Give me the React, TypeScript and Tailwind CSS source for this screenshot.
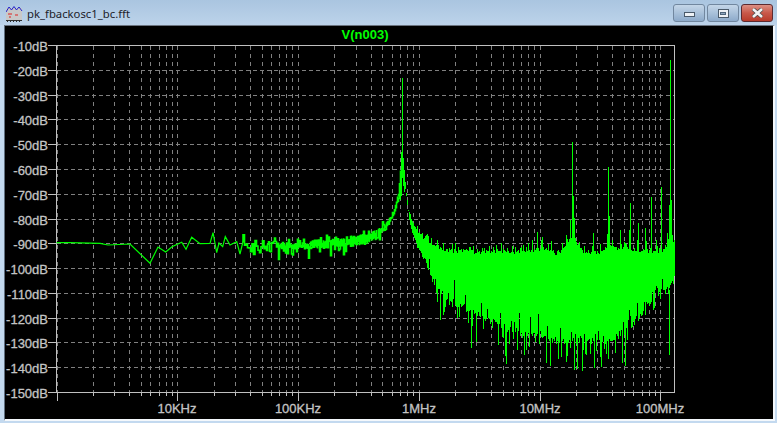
import React from "react";

const GREEN = "#00ff00";
const LEFT = 56.5;
const RIGHT = 674.5;
const TOP = 45.5;
const BOTTOM = 392.5;
const DEC = 120.75;
const X0 = 56.5;

function rng(seed: number) {
  let s = seed;
  return () => {
    s = (s * 1664525 + 1013904223) % 4294967296;
    return s / 4294967296;
  };
}

function interp(pts: number[][], x: number) {
  if (x <= pts[0][0]) return pts[0][1];
  for (let i = 1; i < pts.length; i++) {
    if (x <= pts[i][0]) {
      const [a, b] = pts[i - 1];
      const [c, d] = pts[i];
      return b + ((d - b) * (x - a)) / (c - a);
    }
  }
  return pts[pts.length - 1][1];
}

const leftLine = [
  [56.5, 242.7], [70, 242.7], [100, 243.3], [108, 245], [130, 244], [150, 263.3], [158, 247],
  [165.7, 252], [172, 246.7], [181.7, 242.3], [186, 249.3], [191.7, 237.3], [200, 243.7], [210, 243.3],
  [213, 232.7], [216.7, 252.7], [219, 243], [222.7, 246.7], [225.3, 236.7], [230, 245], [236.7, 241.7],
  [240, 254], [243, 241.7],
];

const midCenter = [
  [243, 245], [300, 246], [340, 243], [370, 238], [380, 232], [385, 228], [390, 220], [395, 210], [399, 193], [401, 165],
];

const upperEnv = [
  [404, 175], [406, 193], [408, 210], [411, 220], [417, 233], [430, 246], [450, 253], [480, 254], [510, 255],
  [530, 253], [545, 251], [555, 256], [562, 253], [568, 244], [572, 236], [576, 244], [582, 253], [600, 255],
  [606, 249], [608, 241], [611, 251], [625, 252], [640, 253], [664, 253], [668, 242], [670, 215], [672, 242], [675, 253],
];

const lowerEnv = [
  [404, 178], [406, 196], [410, 225], [417, 246], [425, 258], [430, 270], [437, 290], [445, 297], [470, 308], [500, 322],
  [520, 330], [560, 338], [600, 338], [620, 332], [640, 314], [655, 292], [668, 285], [675, 276],
];

const spikes: number[][] = [
  [572, 142], [573, 196], [570, 220], [574, 218], [608, 167], [609, 216], [630, 203], [629, 230], [651, 197], [661, 187],
  [638, 223], [637, 240], [645, 228], [620, 230], [593, 233], [537, 232], [542, 237], [541, 240], [532, 240], [528, 243],
  [523, 245], [670, 60], [671, 200], [669, 205], [672, 235], [656, 240], [612, 240], [626, 245], [600, 245], [584, 246],
  [431, 238], [437, 240], [452, 244], [455, 243], [482, 248], [489, 246], [515, 247],
];

const downSpikes: number[][] = [
  [506, 364], [471, 348], [476, 342], [440, 320], [437, 302], [498, 345], [546, 363], [550, 366], [574, 370],
  [582, 371], [594, 368], [608, 359], [622, 363], [625, 366], [669, 355], [558, 359], [566, 362], [505, 356], [517, 350],
  [524, 355], [529, 347], [535, 342], [601, 367], [586, 355], [615, 353], [577, 369],
];

function buildTrace() {
  const r = rng(12345);
  const gauss = () => (r() + r() + r() - 1.5) * 1.4;
  const thin = "M" + leftLine.map((p) => p.join(" ")).join("L");
  let mid = "";
  let band = "";
  let x = 243;
  let prevY = 241.7;
  while (x <= 401) {
    const c = interp(midCenter, x);
    const amp = x < 300 ? 8 : x < 350 ? 7 : x < 385 ? 5.5 : 2;
    const core = x < 280 ? 0 : x < 310 ? 2 : x < 350 ? 3.5 : x < 385 ? 5 : 2.5;
    let y = c + gauss() * amp;
    if (x < 385 && r() < 0.1) y += (r() < 0.6 ? 1 : -0.7) * amp * 1.5;
    mid += `M${x.toFixed(1)} ${prevY.toFixed(1)}L${x.toFixed(1)} ${y.toFixed(1)}`;
    if (core > 0 && r() < 0.85) {
      mid += `M${x.toFixed(1)} ${(c - core * r()).toFixed(1)}L${x.toFixed(1)} ${(c + core * r()).toFixed(1)}`;
    }
    prevY = y;
    x += x < 265 ? 1.5 : 1;
  }
  band += "M402.5 78V178M401.5 152V196M403.5 158V186M400.5 172V200M404.5 170V192";
  for (let px = 404; px <= 674; px++) {
    const u = interp(upperEnv, px) - r() * (px < 415 ? 2 : 5) - (r() < 0.2 ? r() * 9 : 0);
    const base = interp(lowerEnv, px);
    let l = base + (px < 417 ? r() * 2 : r() * 7);
    if (px > 428) {
      const p = r();
      if (p < 0.22) l = base - r() * r() * 22;
      else if (p < 0.42) l = base + r() * 20;
    }
    band += `M${px + 0.5} ${u.toFixed(0)}V${Math.max(l, u + 1).toFixed(0)}`;
  }
  for (const [sx, y] of spikes) band += `M${sx + 0.5} ${y}V262`;
  for (const [sx, y] of downSpikes) band += `M${sx + 0.5} 290V${y}`;
  return { thin, mid, band };
}

const trace = buildTrace();

const dbLabels = Array.from({ length: 15 }, (_, i) => ({
  text: `-${(i + 1) * 10}dB`,
  y: Math.round(45 + (i * 347) / 14) + 0.5,
}));

const decades = [0, 1, 2, 3, 4, 5];
const freqLabels: [number, string][] = [
  [1, "10KHz"], [2, "100KHz"], [3, "1MHz"], [4, "10MHz"], [5, "100MHz"],
];

const vLines: { x: number; major: boolean }[] = [];
for (const dec of decades) {
  for (let m = 1; m <= 9; m++) {
    const x = Math.round(X0 + (dec + Math.log10(m)) * DEC) + 0.5;
    if (x > LEFT && x < RIGHT) vLines.push({ x, major: m === 1 });
  }
}

function Btn({ children, className }: { children: React.ReactNode; className: string }) {
  return (
    <div className={`flex h-[18px] w-[32px] items-center justify-center rounded-[3px] border ${className}`}>
      {children}
    </div>
  );
}

export default function App() {
  return (
    <div className="flex h-[423px] w-[777px] flex-col overflow-hidden bg-[#c3d9ef]">
      <div className="flex h-[25px] shrink-0 items-start bg-gradient-to-b from-[#aac5e0] to-[#bcd3ea] pl-[6px] pr-[4px]">
        <svg width="17" height="18" viewBox="0 0 17 18" className="mt-[5px] shrink-0">
          <rect x="0" y="3" width="16" height="12" fill="#c8c8c8" />
          <path d="M0 7L3 2L5.5 5L8 1.5L10.5 5L13 2L16 6" fill="none" stroke="#2222cc" strokeWidth="1" />
          <path d="M2 9H6M9 10H12M3 12H5" stroke="#e02020" strokeWidth="1" />
          <path d="M0 15.5H16M1.5 15V17M4.5 15V17M7.5 15V17M10.5 15V17M13.5 15V17" stroke="#303030" strokeWidth="1" />
        </svg>
        <span className="ml-[4px] mt-[5px] font-['Noto_Sans',sans-serif] text-[11.3px] leading-[18px] text-[#1c1c2a]">
          pk_fbackosc1_bc.fft
        </span>
        <div className="ml-auto mt-[4px] flex gap-[2px]">
          <Btn className="border-[#71879f] bg-gradient-to-b from-[#c4d6e8] via-[#a9c1da] to-[#8daaca]">
            <div className="mt-[2px] h-[5px] w-[11px] border border-[#4a5a6a] bg-[#eef2f6]" />
          </Btn>
          <Btn className="border-[#71879f] bg-gradient-to-b from-[#c4d6e8] via-[#a9c1da] to-[#8daaca]">
            <div className="flex h-[9px] w-[11px] items-center justify-center border border-[#4a5a6a] bg-[#eef2f6]">
              <div className="h-[3px] w-[6px] border border-[#50667c] bg-[#8ea6be]" />
            </div>
          </Btn>
          <Btn className="border-[#5c2a30] bg-gradient-to-b from-[#dc8f84] via-[#c8584a] to-[#b83a2a]">
            <svg width="13" height="10" viewBox="0 0 13 10">
              <path d="M2 1L11 9M11 1L2 9" stroke="#4a4a4a" strokeWidth="4" />
              <path d="M2 1L11 9M11 1L2 9" stroke="#f2f2f2" strokeWidth="2.6" />
            </svg>
          </Btn>
        </div>
      </div>
      <div className="mb-[2px] ml-[4px] mr-[2px] flex min-h-0 flex-1 border-b-2 border-l border-r-2 border-t border-[#f4f8fc] border-l-[#5f6f80] border-t-[#6b7480] bg-black">
        <svg width="768" height="393" viewBox="5 26 768 393" className="block shrink-0">
          <g stroke="#808080" strokeWidth="1" shapeRendering="crispEdges" fill="none">
            {dbLabels.slice(1, 14).map((l) => (
              <path key={l.text} d={`M${LEFT} ${l.y}H${RIGHT}`} strokeDasharray="4 3" />
            ))}
            {vLines.map((v) => (
              <path key={v.x} d={`M${v.x} ${TOP}V${BOTTOM}`} strokeDasharray="4 4" />
            ))}
          </g>
          <g stroke="#c0c0c0" strokeWidth="1" shapeRendering="crispEdges" fill="none">
            <rect x={LEFT} y={TOP} width={RIGHT - LEFT} height={BOTTOM - TOP} />
            {dbLabels.map((l) => (
              <path key={l.text} d={`M48 ${l.y}H${LEFT}`} />
            ))}
            {vLines.map((v) => (
              <path key={v.x} d={`M${v.x} ${BOTTOM}V${BOTTOM + (v.major ? 8 : 3)}`} />
            ))}
          </g>
          <path d={trace.thin} fill="none" stroke={GREEN} strokeWidth="1.2" />
          <path d={trace.mid} fill="none" stroke={GREEN} strokeWidth="1.6" strokeLinecap="square" />
          <path d={trace.band} fill="none" stroke={GREEN} strokeWidth="1.1" shapeRendering="crispEdges" />
          <g fontFamily="'Liberation Sans', Arial, sans-serif" fontSize="13" fill="#c4c4c4" stroke="#c4c4c4" strokeWidth="0.3">
            {dbLabels.map((l) => (
              <text key={l.text} x="48" y={l.y + 5} textAnchor="end">
                {l.text}
              </text>
            ))}
            {freqLabels.map(([d, t]) => (
              <text key={t} x={Math.round(X0 + d * DEC)} y="413" textAnchor="middle">
                {t}
              </text>
            ))}
          </g>
          <text
            x="365"
            y="39"
            textAnchor="middle"
            fontFamily="'Liberation Sans', Arial, sans-serif"
            fontSize="13"
            fontWeight="700"
            fill={GREEN}
          >
            V(n003)
          </text>
        </svg>
      </div>
    </div>
  );
}
